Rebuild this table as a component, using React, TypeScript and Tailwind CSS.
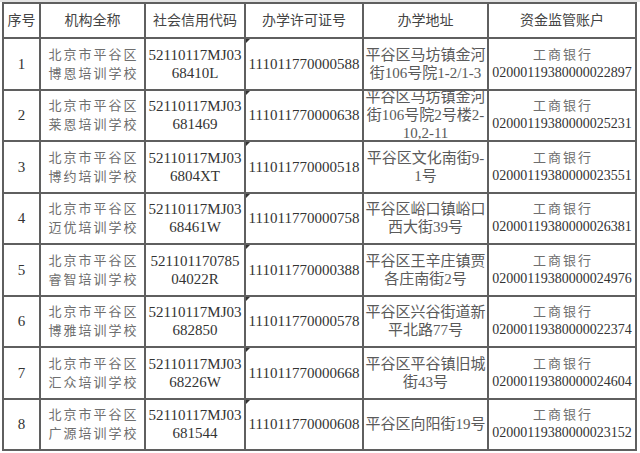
import React from "react";

type Row = {
  no: string;
  name: string[];
  code: string[];
  license: string;
  addr: string[];
  acct: string;
};

const rows: Row[] = [
  { no: "1", name: ["北京市平谷区", "博恩培训学校"], code: ["52110117MJ03", "68410L"], license: "111011770000588", addr: ["平谷区马坊镇金河", "街106号院1-2/1-3"], acct: "02000119380000022897" },
  { no: "2", name: ["北京市平谷区", "莱恩培训学校"], code: ["52110117MJ03", "681469"], license: "111011770000638", addr: ["平谷区马坊镇金河", "街106号院2号楼2-", "10,2-11"], acct: "02000119380000025231" },
  { no: "3", name: ["北京市平谷区", "博约培训学校"], code: ["52110117MJ03", "6804XT"], license: "111011770000518", addr: ["平谷区文化南街9-", "1号"], acct: "02000119380000023551" },
  { no: "4", name: ["北京市平谷区", "迈优培训学校"], code: ["52110117MJ03", "68461W"], license: "111011770000758", addr: ["平谷区峪口镇峪口", "西大街39号"], acct: "02000119380000026381" },
  { no: "5", name: ["北京市平谷区", "睿智培训学校"], code: ["521101170785", "04022R"], license: "111011770000388", addr: ["平谷区王辛庄镇贾", "各庄南街2号"], acct: "02000119380000024976" },
  { no: "6", name: ["北京市平谷区", "博雅培训学校"], code: ["52110117MJ03", "682850"], license: "111011770000578", addr: ["平谷区兴谷街道新", "平北路77号"], acct: "02000119380000022374" },
  { no: "7", name: ["北京市平谷区", "汇众培训学校"], code: ["52110117MJ03", "68226W"], license: "111011770000668", addr: ["平谷区平谷镇旧城", "街43号"], acct: "02000119380000024604" },
  { no: "8", name: ["北京市平谷区", "广源培训学校"], code: ["52110117MJ03", "681544"], license: "111011770000608", addr: ["平谷区向阳街19号"], acct: "02000119380000023152" },
];

const headers = ["序号", "机构全称", "社会信用代码", "办学许可证号", "办学地址", "资金监管账户"];

const cell = "bg-white flex flex-col items-center justify-center text-center overflow-hidden leading-[18px]";

export default function App() {
  return (
    <div
      className="w-[640px] h-[453px] bg-white overflow-hidden"
      style={{ fontFamily: '"Liberation Serif", "Noto Sans CJK SC", serif' }}
    >
      <div className="h-[2px] bg-[#e4e4e4]" />
      <div className="pl-[2px]">
        <div className="w-[635px] grid grid-cols-[35px_103px_98px_116px_123px_146px] grid-rows-[33px_repeat(8,49.5px)] gap-[2px] p-[2px] bg-[#5f5f5f]">
          {headers.map((h) => (
            <div key={h} className={`${cell} text-[14px] text-[#444]`}>
              {h}
            </div>
          ))}
          {rows.map((r) => (
            <React.Fragment key={r.no}>
              <div className={`${cell} text-[15px] text-[#333]`}>{r.no}</div>
              <div className={`${cell} text-[13px] tracking-[2px] pl-[2px] text-[#6e6e6e] leading-[19px]`}>
                {r.name.map((l) => (
                  <div key={l}>{l}</div>
                ))}
              </div>
              <div className={`${cell} text-[15px] text-[#333]`}>
                {r.code.map((l) => (
                  <div key={l}>{l}</div>
                ))}
              </div>
              <div className={`${cell} relative text-[15px] text-[#333]`}>
                <div className="absolute left-0 top-0 w-0 h-0 border-t-[4px] border-r-[4px] border-t-[#333] border-r-transparent" />
                {r.license}
              </div>
              <div className={`${cell} text-[15px] text-[#5a5a5a] whitespace-nowrap`}>
                {r.addr.map((l) => (
                  <div key={l}>{l}</div>
                ))}
              </div>
              <div className={`${cell} text-[14px] text-[#333]`}>
                <div className="text-[13px] text-[#6e6e6e] tracking-[2px] pl-[2px]">工商银行</div>
                <div>{r.acct}</div>
              </div>
            </React.Fragment>
          ))}
        </div>
      </div>
    </div>
  );
}
